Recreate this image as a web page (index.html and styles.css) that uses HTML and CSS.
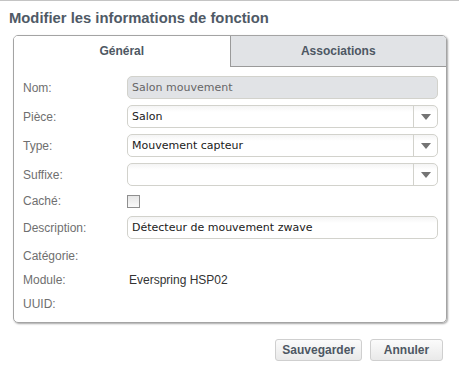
FILE: index.html
```html
<!DOCTYPE html>
<html lang="fr">
<head>
  <meta charset="UTF-8" />
  <title>Modifier les informations de fonction</title>
  <link rel="stylesheet" href="styles.css">
</head>
<body>
  <div class="dialog">
    <h1 class="title">Modifier les informations de fonction</h1>

    <div class="panel">
      <div class="tabs">
        <div class="tab active">Général</div>
        <div class="tab">Associations</div>
      </div>

      <div class="form">
        <div class="row">
          <label>Nom:</label>
          <div class="field disabled">Salon mouvement</div>
        </div>
        <div class="row">
          <label>Pièce:</label>
          <div class="field select"><span class="value">Salon</span><span class="arrow"></span></div>
        </div>
        <div class="row">
          <label>Type:</label>
          <div class="field select"><span class="value">Mouvement capteur</span><span class="arrow"></span></div>
        </div>
        <div class="row">
          <label>Suffixe:</label>
          <div class="field select"><span class="value"></span><span class="arrow"></span></div>
        </div>
        <div class="row short">
          <label>Caché:</label>
          <span class="checkbox"></span>
        </div>
        <div class="row">
          <label>Description:</label>
          <div class="field">Détecteur de mouvement zwave</div>
        </div>
        <div class="row text first">
          <label>Catégorie:</label>
          <span class="plain"></span>
        </div>
        <div class="row text">
          <label>Module:</label>
          <span class="plain">Everspring HSP02</span>
        </div>
        <div class="row text">
          <label>UUID:</label>
          <span class="plain"></span>
        </div>
      </div>
    </div>

    <div class="actions">
      <button>Sauvegarder</button>
      <button>Annuler</button>
    </div>
  </div>
</body>
</html>
```

FILE: styles.css
```css
* {
  margin: 0;
  padding: 0;
  box-sizing: border-box;
}

body {
  background: #fff;
  font-family: 'Liberation Sans', Arial, sans-serif;
  font-size: 12px;
  color: #333;
}

.dialog {
  border-top: 1px solid #c4c4c4;
  height: 375px;
}

.title {
  padding: 8px 9px 0;
  height: 26px;
  font-size: 14.8px;
  line-height: 18px;
  font-weight: bold;
  color: #4f5a66;
}

.panel {
  margin: 8px 0 0 13px;
  width: 434px;
  border: 1px solid #a4a4a4;
  border-radius: 5px;
  box-shadow: 1px 1px 2px rgba(0, 0, 0, 0.35);
  overflow: hidden;
}

.tabs {
  display: flex;
  height: 31px;
}

.tab {
  flex: 1;
  text-align: center;
  font-weight: bold;
  color: #4d5763;
  line-height: 30px;
  background: #e1e3e6;
  border-left: 1px solid #9a9a9a;
  border-bottom: 1px solid #9a9a9a;
}

.tab.active {
  background: #fff;
  border: none;
}

.form {
  padding: 9px 8px 6px 9px;
}

.row {
  display: flex;
  align-items: center;
  height: 23px;
  margin-bottom: 6px;
}

.row.short {
  height: 18px;
}

.row.text {
  height: 24px;
  margin-bottom: 0;
}

.row.first {
  margin-top: -1px;
}

.row label {
  width: 104px;
  flex: none;
  color: #6f6f6f;
}

.field {
  flex: 1;
  height: 23px;
  display: flex;
  align-items: center;
  padding: 0 4px;
  border: 1px solid #d2d2cc;
  border-radius: 5px;
  background: linear-gradient(#f4f4f4, #fff 6px);
  font-family: 'DejaVu Sans', Verdana, sans-serif;
  font-size: 11px;
  color: #1a1a1a;
}

.field.disabled {
  background: #e1e3e6;
  color: #666;
}

.field.select {
  padding: 0 0 0 4px;
}

.select .value {
  flex: 1;
}

.select .arrow {
  width: 24px;
  height: 100%;
  border-left: 1px solid #d2d2cc;
  display: flex;
  align-items: center;
  justify-content: center;
}

.select .arrow::after {
  content: "";
  border-left: 5px solid transparent;
  border-right: 5px solid transparent;
  border-top: 6px solid #747474;
}

.checkbox {
  width: 13px;
  height: 13px;
  border: 1px solid #8f8f8f;
  background: linear-gradient(#e6e6e6, #fafafa);
}

.plain {
  padding-left: 2px;
  color: #333;
}

.actions {
  display: flex;
  justify-content: flex-end;
  gap: 8px;
  margin: 16px 16px 0 0;
}

button {
  font-family: inherit;
  font-size: 12px;
  font-weight: bold;
  color: #4d5763;
  height: 22px;
  min-width: 73px;
  padding: 0 6px;
  border: 1px solid #cfcfcf;
  border-radius: 3px;
  background: linear-gradient(#fbfbfb, #e9e9e9);
}
```
